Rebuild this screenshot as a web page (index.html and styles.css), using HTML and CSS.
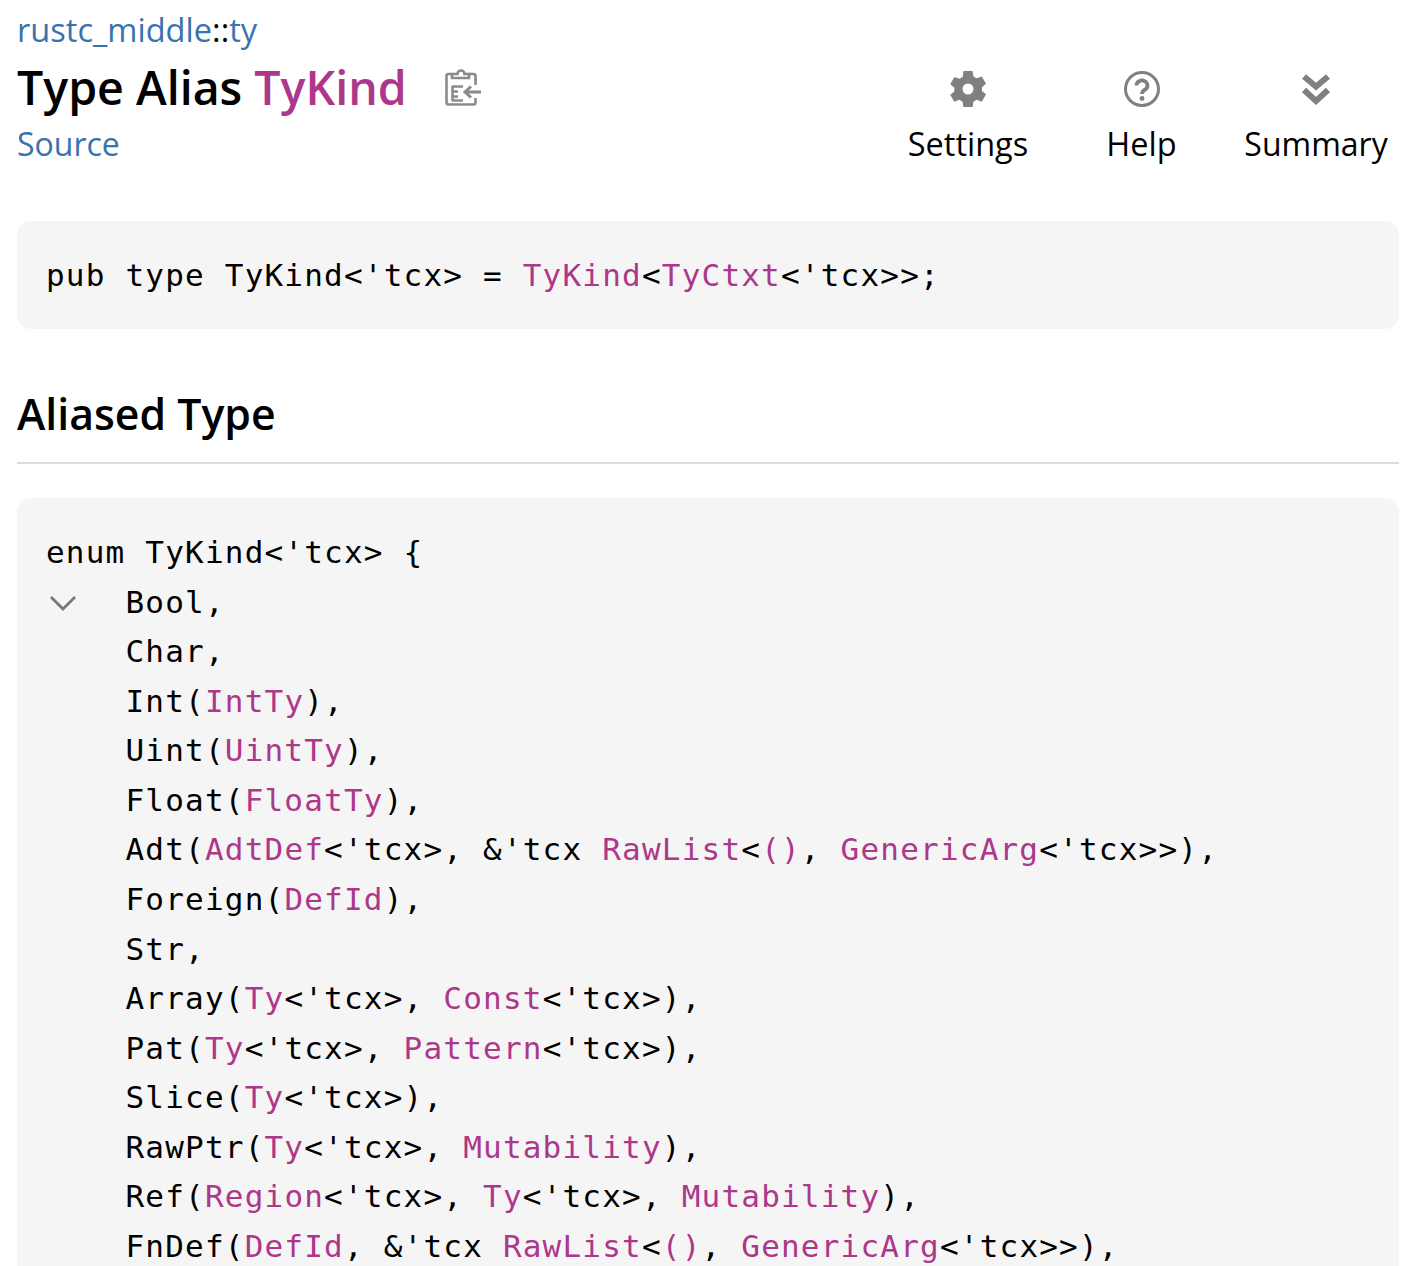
FILE: index.html
```html
<!DOCTYPE html>
<html lang="en">
<head>
<meta charset="utf-8">
<title>TyKind</title>
<link rel="stylesheet" href="styles.css">
</head>
<body>
<main class="page">
  <div class="heading">
    <div class="title-col">
      <div class="crumbs"><a>rustc_middle</a>::<a>ty</a></div>
      <h1>Type Alias <span class="alias">TyKind</span>
        <svg class="copy" viewBox="0 0 36 37" width="36" height="37" aria-hidden="true">
          <g fill="none" stroke="#8a8a8a" stroke-width="2.6">
            <path d="M7 5H3.500a2 2 0 0 0-2 2v26.500a2 2 0 0 0 2 2h25a2 2 0 0 0 2-2V29M24 5h4.500a2 2 0 0 1 2 2v9"/>
            <path d="M7 9h17V5h-4.500a3.500 3.500 0 0 0-7 0H7z"/>
            <path d="M7 17.500h11M7 22.500h6M7 27.500h6M7 31.500h11M7.500 17v15"/>
            <path d="M36 23H21M26 17.500l-6 5.500 6 5.500" stroke-width="3"/>
          </g>
        </svg>
      </h1>
      <a class="source">Source</a>
    </div>
    <nav class="tools">
      <div class="tool tool-settings">
        <svg viewBox="0 0 36 36" width="36" height="36" aria-hidden="true"><path fill-rule="evenodd" fill="#808080" d="M13.5 0h9l1 5.4 3.2 1.9 5.1-1.9 4.2 7.4-4.1 3.4v3.7l4.1 3.4-4.2 7.4-5.1-1.9-3.2 1.9-1 5.4h-9l-1-5.4-3.2-1.9-5.1 1.9L.2 23.800l4.100-3.400v-3.700L.2 13.300l4.200-7.400 5.100 1.900 3.200-1.900zM18 12.500a5.500 5.500 0 1 0 0 11 5.500 5.500 0 0 0 0-11z"/></svg>
        <span>Settings</span>
      </div>
      <div class="tool tool-help">
        <svg viewBox="0 0 36 36" width="36" height="36" aria-hidden="true"><circle cx="18" cy="18" r="16.500" fill="none" stroke="#808080" stroke-width="3"/><path d="M12.500 14.500a5.500 5 0 1 1 8.500 4.200c-2 1.300-3 2-3 4.300" fill="none" stroke="#808080" stroke-width="3.800"/><circle cx="18" cy="27.500" r="2.400" fill="#808080"/></svg>
        <span>Help</span>
      </div>
      <div class="tool tool-summary">
        <svg viewBox="0 0 36 36" width="36" height="36" aria-hidden="true"><path d="M6 5.500l12 10 12-10M6 19l12 11 12-11" fill="none" stroke="#808080" stroke-width="6"/></svg>
        <span>Summary</span>
      </div>
    </nav>
  </div>
  <pre class="code decl">pub type TyKind&lt;'tcx&gt; = <a>TyKind</a>&lt;<a>TyCtxt</a>&lt;'tcx&gt;&gt;;</pre>
  <h2>Aliased Type</h2>
  <pre class="code body-code"><svg class="toggle" viewBox="0 0 28 16" width="28" height="16" aria-hidden="true"><path d="M2 2l12 12L26 2" fill="none" stroke="#777" stroke-width="2.800"/></svg>enum TyKind&lt;'tcx&gt; {
    Bool,
    Char,
    Int(<a>IntTy</a>),
    Uint(<a>UintTy</a>),
    Float(<a>FloatTy</a>),
    Adt(<a>AdtDef</a>&lt;'tcx&gt;, &amp;'tcx <a>RawList</a>&lt;<a>()</a>, <a>GenericArg</a>&lt;'tcx&gt;&gt;),
    Foreign(<a>DefId</a>),
    Str,
    Array(<a>Ty</a>&lt;'tcx&gt;, <a>Const</a>&lt;'tcx&gt;),
    Pat(<a>Ty</a>&lt;'tcx&gt;, <a>Pattern</a>&lt;'tcx&gt;),
    Slice(<a>Ty</a>&lt;'tcx&gt;),
    RawPtr(<a>Ty</a>&lt;'tcx&gt;, <a>Mutability</a>),
    Ref(<a>Region</a>&lt;'tcx&gt;, <a>Ty</a>&lt;'tcx&gt;, <a>Mutability</a>),
    FnDef(<a>DefId</a>, &amp;'tcx <a>RawList</a>&lt;<a>()</a>, <a>GenericArg</a>&lt;'tcx&gt;&gt;),
</pre>
</main>
</body>
</html>
```

FILE: styles.css
```css
html, body {
  margin: 0;
  height: 1266px;
  overflow: hidden;
  background: #fff;
}
body {
  font-family: "Open Sans", "Noto Sans", sans-serif;
  color: #000;
}
.page {
  padding: 0 24px 0 17px;
}
.heading {
  display: flex;
  justify-content: space-between;
  align-items: flex-end;
  height: 221px;
  padding-bottom: 51px;
  box-sizing: border-box;
}
.crumbs {
  font-size: 32.6px;
  line-height: 38px;
  color: #000;
  margin-bottom: 7px;
}
.crumbs a, .source {
  color: #3873ad;
}
h1 {
  display: flex;
  align-items: center;
  margin: 0;
  font-size: 46.5px;
  line-height: 62px;
  font-weight: 600;
  white-space: pre;
}
.alias {
  color: #ad378a;
}
.copy {
  margin-left: 38px;
}
.source {
  display: block;
  font-size: 32px;
  line-height: 52px;
}
.tools {
  display: flex;
  font-size: 32.5px;
  line-height: 52px;
  margin-right: 12px;
}
.tool {
  display: flex;
  flex-direction: column;
  align-items: center;
  gap: 11px;
}
.tool-settings { width: 122px; }
.tool-help { width: 69px; margin-left: 78px; }
.tool-summary { width: 142px; margin-left: 69px; font-size: 32px; }
.code {
  margin: 0;
  background: #f5f5f5;
  border-radius: 14px;
  padding: 30px 29px 29px;
  font-family: "DejaVu Sans Mono", "Liberation Mono", monospace;
  font-size: 31px;
  letter-spacing: 1.2px;
  line-height: 49.57px;
  position: relative;
  white-space: pre;
}
.code a {
  color: #ad378a;
}
.decl {
  height: 108px;
  box-sizing: border-box;
}
h2 {
  margin: 57px 0 34px;
  font-size: 42.8px;
  line-height: 56px;
  font-weight: 600;
  padding-bottom: 20px;
  border-bottom: 2px solid #ddd;
}
.toggle {
  position: absolute;
  left: 32px;
  top: 97px;
}
```
